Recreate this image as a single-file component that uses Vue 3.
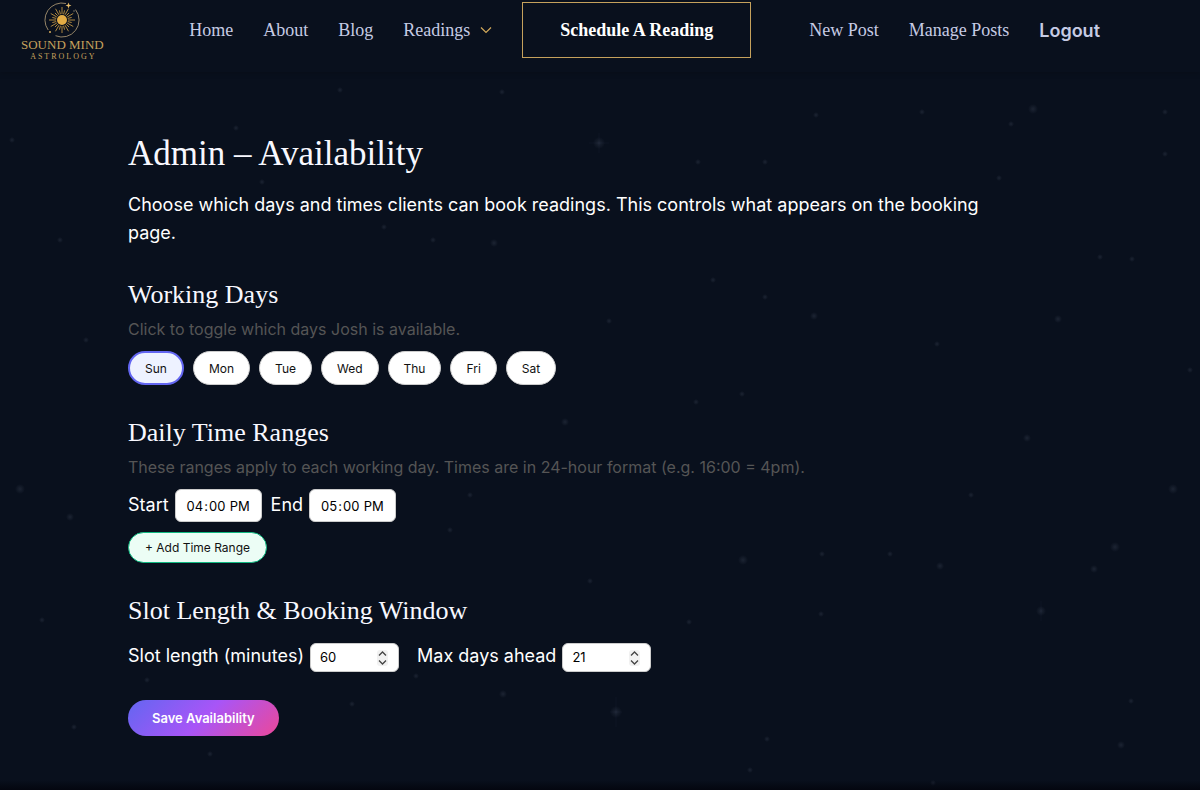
<script setup>
import { ref } from 'vue'

const days = ['Sun', 'Mon', 'Tue', 'Wed', 'Thu', 'Fri', 'Sat']
const active = ref(['Sun'])
const ranges = ref([{ start: '16:00', end: '17:00' }])
const slotLength = ref(60)
const maxDays = ref(21)

function toggle(day) {
  active.value = active.value.includes(day)
    ? active.value.filter((d) => d !== day)
    : [...active.value, day]
}

function addRange() {
  ranges.value.push({ start: '16:00', end: '17:00' })
}

const rays = Array.from({ length: 24 }, (_, i) => {
  const a = (i * Math.PI) / 12
  const r = i % 2 ? 10 : 13
  return { x1: 6 * Math.cos(a), y1: 6 * Math.sin(a), x2: r * Math.cos(a), y2: r * Math.sin(a) }
})

// x, y, radius
const stars = [
  [599, 143, 5], [1033, 109, 4], [1011, 124, 2], [1165, 154, 2], [814, 316, 3], [1058, 319, 3],
  [937, 344, 2], [1027, 438, 3], [565, 422, 3], [1173, 489, 4], [743, 560, 4], [940, 566, 3],
  [1115, 547, 4], [1094, 569, 3], [1041, 611, 4], [616, 712, 5], [1121, 745, 3], [933, 783, 2],
  [821, 614, 2], [696, 402, 2], [971, 495, 2], [822, 554, 2], [890, 554, 2],
  [1132, 259, 2], [1100, 257, 2], [999, 178, 2], [922, 112, 2], [816, 115, 2], [717, 209, 2],
  [765, 162, 2], [698, 162, 2], [713, 280, 2], [765, 297, 2], [609, 321, 2], [742, 394, 2],
  [590, 581, 2], [689, 622, 2], [1131, 701, 2], [767, 739, 2], [750, 770, 2],
  [20, 489, 4], [70, 517, 3], [494, 243, 3], [470, 495, 2], [384, 227, 2], [433, 240, 2],
  [236, 128, 2], [262, 182, 2], [272, 706, 3], [210, 754, 2], [147, 680, 2], [352, 704, 2],
  [503, 694, 3], [416, 676, 2], [450, 530, 2], [12, 140, 2], [60, 240, 2], [86, 340, 2],
  [42, 620, 2], [74, 727, 2], [340, 90, 2], [502, 92, 2], [1165, 112, 2], [1190, 370, 2],
]
</script>

<template>
  <div class="page">
    <svg class="sky" viewBox="0 0 1200 790" preserveAspectRatio="xMidYMid slice" aria-hidden="true">
      <defs>
        <radialGradient id="glow">
          <stop offset="0" stop-color="#a9b6d2" stop-opacity=".12" />
          <stop offset="1" stop-color="#a9b6d2" stop-opacity="0" />
        </radialGradient>
      </defs>
      <circle v-for="(s, i) in stars" :key="i" :cx="s[0]" :cy="s[1]" :r="s[2] + 1" fill="url(#glow)" />
      <path d="M599 133v20M589 143h20M616 697v30M610 712h12M1041 601v20" stroke="#a9b6d2" stroke-opacity=".04" />
    </svg>

    <header class="bar">
      <a class="logo" href="#" aria-label="Sound Mind Astrology">
        <svg width="38" height="36" viewBox="-19 -18 38 36" fill="none" stroke="#b9a27a" aria-hidden="true">
          <path d="M4-16.5A17 17 0 0 0-13.8 10M-6.5 15.7A17 17 0 0 0 13.5-10.4" stroke-width=".8" />
          <g stroke="#d6a549" stroke-width=".8">
            <line v-for="(r, i) in rays" :key="i" v-bind="r" />
          </g>
          <circle r="5" fill="#e3ac45" stroke="none" />
          <path d="M6.500-17.500 7.300-15.300 9.500-14.500 7.300-13.700 6.500-11.500 5.700-13.700 3.500-14.500 5.700-15.300Z" fill="#e8bc69" stroke="none" />
          <circle cx="12" cy="-9" r=".8" fill="#7b7566" stroke="none" />
          <circle cx="-12" cy="12" r="1" fill="#d9ad5c" stroke="none" />
        </svg>
        <span class="name">SOUND MIND</span>
        <span class="sub">ASTROLOGY</span>
      </a>
      <nav class="links">
        <a href="#">Home</a>
        <a href="#">About</a>
        <a href="#">Blog</a>
        <a href="#" class="drop">Readings
          <svg width="12" height="8" viewBox="0 0 12 8" fill="none" stroke="#d2a95a" stroke-width="1.2" aria-hidden="true"><path d="M1 1.500 6 6.500 11 1.500" /></svg>
        </a>
        <a href="#" class="cta">Schedule A Reading</a>
        <a href="#">New Post</a>
        <a href="#">Manage Posts</a>
        <button type="button" class="logout">Logout</button>
      </nav>
    </header>

    <main>
      <h1>Admin – Availability</h1>
      <p class="intro">Choose which days and times clients can book readings. This controls what appears on the booking page.</p>

      <section>
        <h2>Working Days</h2>
        <p class="hint">Click to toggle which days Josh is available.</p>
        <div class="days">
          <button
            v-for="d in days" :key="d" type="button" class="pill"
            :class="{ on: active.includes(d) }" :aria-pressed="active.includes(d)" @click="toggle(d)"
          >{{ d }}</button>
        </div>
      </section>

      <section>
        <h2>Daily Time Ranges</h2>
        <p class="hint">These ranges apply to each working day. Times are in 24-hour format (e.g. 16:00 = 4pm).</p>
        <div v-for="(r, i) in ranges" :key="i" class="row times">
          <label>Start <input v-model="r.start" type="time"></label>
          <label>End <input v-model="r.end" type="time"></label>
        </div>
        <button type="button" class="add" @click="addRange">+ Add Time Range</button>
      </section>

      <section>
        <h2>Slot Length &amp; Booking Window</h2>
        <div class="row numbers">
          <label>Slot length (minutes)
            <span class="num">
              <input v-model="slotLength" type="number">
              <svg class="spin" width="11" height="16" viewBox="0 0 11 16" aria-hidden="true"><rect width="11" height="16" rx="3" fill="#f1f1f1" /><path d="M2 5.500 5.500 2 9 5.500M2 10.500 5.500 14 9 10.500" fill="none" stroke="#444" stroke-width="1.3" /></svg>
            </span>
          </label>
          <label>Max days ahead
            <span class="num">
              <input v-model="maxDays" type="number">
              <svg class="spin" width="11" height="16" viewBox="0 0 11 16" aria-hidden="true"><rect width="11" height="16" rx="3" fill="#f1f1f1" /><path d="M2 5.500 5.500 2 9 5.500M2 10.500 5.500 14 9 10.500" fill="none" stroke="#444" stroke-width="1.3" /></svg>
            </span>
          </label>
        </div>
      </section>

      <button type="button" class="save">Save Availability</button>
    </main>
  </div>
</template>

<style>
body {
  margin: 0;
  background: #09101d;
}
</style>

<style scoped>
.page {
  position: relative;
  min-height: 100vh;
  box-sizing: border-box;
  overflow: hidden;
  background: #09101d;
  color: #fff;
  font: 18px/28px Inter, "Liberation Sans", sans-serif;
}
.page::after {
  content: "";
  position: absolute;
  inset: auto 0 0;
  height: 10px;
  background: linear-gradient(transparent, #04060f);
}
.sky {
  position: absolute;
  inset: 0;
  width: 100%;
  height: 100%;
}
.bar {
  position: relative;
  display: flex;
  align-items: flex-start;
  justify-content: space-between;
  gap: 40px;
  min-height: 72px;
  padding: 0 100px 0 21px;
  box-sizing: border-box;
  background: #09101d;
  box-shadow: 0 1px 6px rgba(0, 0, 0, .2);
}
.logo {
  display: flex;
  flex-direction: column;
  align-items: center;
  padding-top: 2px;
  color: #c5a15c;
  font-family: "Liberation Serif", serif;
  text-decoration: none;
  white-space: nowrap;
}
.name {
  font-size: 13px;
  line-height: 14px;
}
.sub {
  padding-left: 2px;
  font-size: 8px;
  line-height: 9px;
  letter-spacing: 2px;
}
.links {
  display: flex;
  align-items: center;
  gap: 30px;
  padding-top: 2px;
  white-space: nowrap;
}
.links a {
  color: #c6cbe4;
  font-family: "Liberation Serif", serif;
  font-size: 18px;
  text-decoration: none;
}
.links .drop {
  display: flex;
  align-items: center;
  gap: 10px;
}
.links .cta {
  margin-right: 28px;
  padding: 13px 37px;
  border: 1px solid #c5a15c;
  color: #fff;
  font-weight: 700;
}
button {
  font-family: inherit;
  cursor: pointer;
}
.logout {
  padding: 0;
  border: 0;
  background: none;
  color: #c6cbe4;
  font-size: 18px;
  font-weight: 600;
}
main {
  position: relative;
  padding: 62px 128px 50px;
}
h1, h2, p {
  margin: 0;
}
h1, h2 {
  color: #f8f8ff;
  font-family: "Liberation Serif", serif;
  font-weight: 400;
}
h1 {
  font-size: 35px;
  line-height: 40px;
}
h2 {
  font-size: 26px;
  line-height: 32px;
}
.intro {
  max-width: 896px;
  margin-top: 17px;
}
section {
  margin-top: 32px;
}
.hint {
  margin-top: 6px;
  color: #555;
  font-size: 16px;
  line-height: 24px;
}
.days {
  display: flex;
  flex-wrap: wrap;
  gap: 9px;
  margin-top: 10px;
}
.pill {
  height: 34px;
  padding: 0 15px;
  border: 1px solid #ccc;
  border-radius: 17px;
  background: #fff;
  color: #111;
  font-size: 12px;
}
.pill.on {
  border: 2px solid #6366f1;
  background: #eef2ff;
}
.row {
  display: flex;
  flex-wrap: wrap;
}
.row label {
  display: flex;
  align-items: baseline;
  gap: 6px;
}
.times {
  gap: 9px;
  margin-top: 10px;
}
.numbers {
  gap: 18px;
  margin-top: 15px;
}
input {
  box-sizing: border-box;
  border: 1px solid #ccc;
  border-radius: 6px;
  background: #fff;
  color: #000;
  font: 13px/16px Inter, "Liberation Sans", sans-serif;
}
input[type="time"] {
  width: 87px;
  height: 33px;
  padding: 0 10px;
}
input[type="time"]::-webkit-calendar-picker-indicator {
  display: none;
}
.num {
  position: relative;
}
.num input {
  display: block;
  width: 89px;
  height: 29px;
  padding: 0 24px 0 9px;
  appearance: textfield;
}
.num input::-webkit-inner-spin-button {
  appearance: none;
  margin: 0;
}
.spin {
  position: absolute;
  top: 7px;
  right: 11px;
  pointer-events: none;
}
.add {
  display: block;
  height: 31px;
  margin-top: 10px;
  padding: 0 16px;
  border: 1px solid #10b981;
  border-radius: 16px;
  background: #ecfdf5;
  color: #111;
  font-size: 12px;
}
.save {
  display: block;
  height: 36px;
  margin-top: 28px;
  padding: 0 24px;
  border: 0;
  border-radius: 18px;
  background: linear-gradient(135deg, #6366f1, #a855f7 50%, #ec4899);
  color: #fff;
  font-size: 13px;
  font-weight: 600;
}
</style>
